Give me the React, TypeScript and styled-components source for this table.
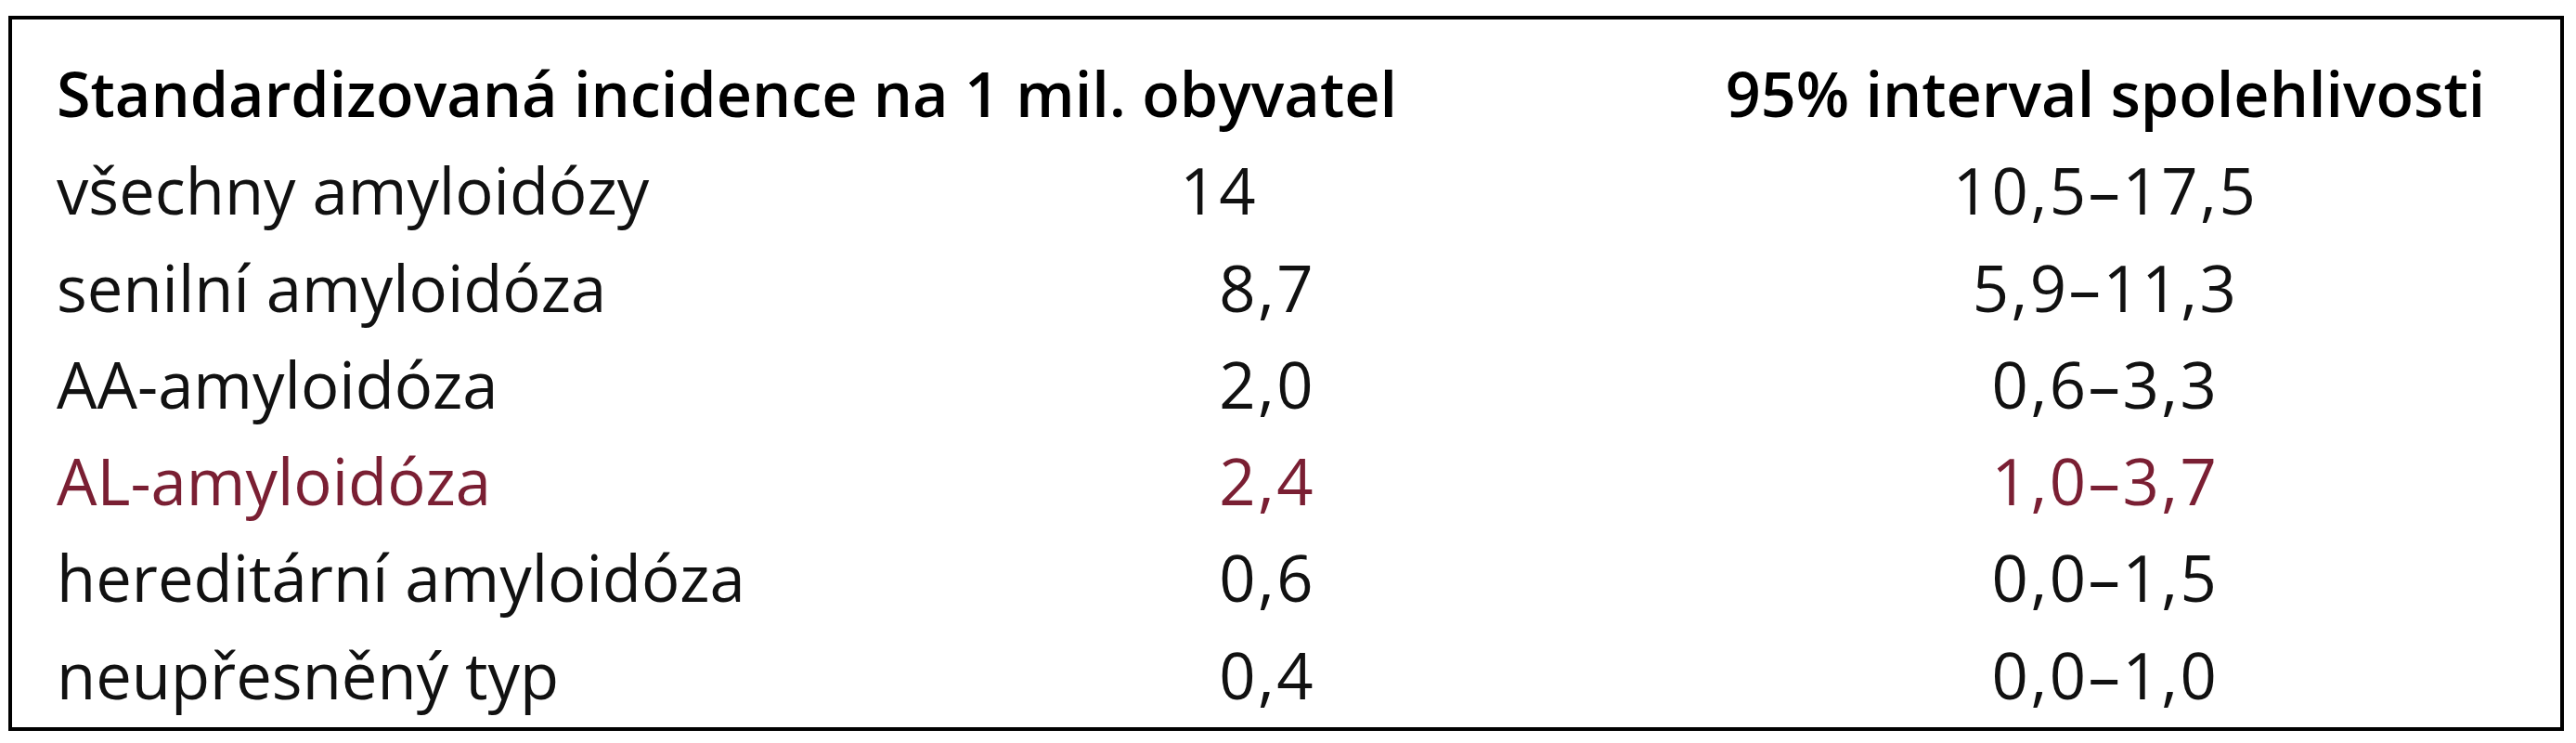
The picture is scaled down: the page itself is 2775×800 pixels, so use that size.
import React from "react";
import styled, { createGlobalStyle } from "styled-components";

const GlobalStyle = createGlobalStyle`
  html, body {
    margin: 0;
    padding: 0;
    background: #ffffff;
  }
  body {
    font-family: "Open Sans", "Noto Sans", sans-serif;
    color: #000;
  }
`;

const Page = styled.div`
  padding: 17px 0 0 9px;
`;

const Table = styled.div`
  box-sizing: border-box;
  width: 2753px;
  border: 4px solid #000;
  padding: 27px 0 5px 48px;
  display: grid;
  grid-template-columns: 1204px 513px 1fr;
  grid-auto-rows: 104.3px;
  line-height: 104.3px;
  white-space: nowrap;
`;

const HeadCell = styled.div<{ $wide?: boolean; $center?: boolean }>`
  font-size: 66.5px;
  font-weight: 600;
  grid-column: ${(p) => (p.$wide ? "span 2" : "auto")};
  text-align: ${(p) => (p.$center ? "center" : "left")};
`;

const Cell = styled.div<{ $hl?: boolean }>`
  font-size: 68.8px;
  font-weight: 400;
  color: ${(p) => (p.$hl ? "#7a1f33" : "#111")};
`;

const LabelCell = styled(Cell)``;

const NumCell = styled(Cell)`
  letter-spacing: 2.5px;
`;

// integer part, right-aligned so the commas line up
const IntPart = styled.span`
  display: inline-block;
  width: 90px;
  text-align: right;
`;

const RangeCell = styled(Cell)`
  letter-spacing: 2.5px;
  text-align: center;
`;

interface Row {
  label: string;
  int: string;
  frac: string;
  range: string;
  hl?: boolean;
}

const rows: Row[] = [
  { label: "všechny amyloidózy", int: "14", frac: "", range: "10,5–17,5" },
  { label: "senilní amyloidóza", int: "8", frac: ",7", range: "5,9–11,3" },
  { label: "AA-amyloidóza", int: "2", frac: ",0", range: "0,6–3,3" },
  { label: "AL-amyloidóza", int: "2", frac: ",4", range: "1,0–3,7", hl: true },
  { label: "hereditární amyloidóza", int: "0", frac: ",6", range: "0,0–1,5" },
  { label: "neupřesněný typ", int: "0", frac: ",4", range: "0,0–1,0" },
];

export default function App() {
  return (
    <>
      <GlobalStyle />
      <Page>
        <Table>
          <HeadCell $wide>Standardizovaná incidence na 1 mil. obyvatel</HeadCell>
          <HeadCell $center>95% interval spolehlivosti</HeadCell>
          {rows.map((r) => (
            <React.Fragment key={r.label}>
              <LabelCell $hl={r.hl}>{r.label}</LabelCell>
              <NumCell $hl={r.hl}>
                <IntPart>{r.int}</IntPart>
                {r.frac}
              </NumCell>
              <RangeCell $hl={r.hl}>{r.range}</RangeCell>
            </React.Fragment>
          ))}
        </Table>
      </Page>
    </>
  );
}
